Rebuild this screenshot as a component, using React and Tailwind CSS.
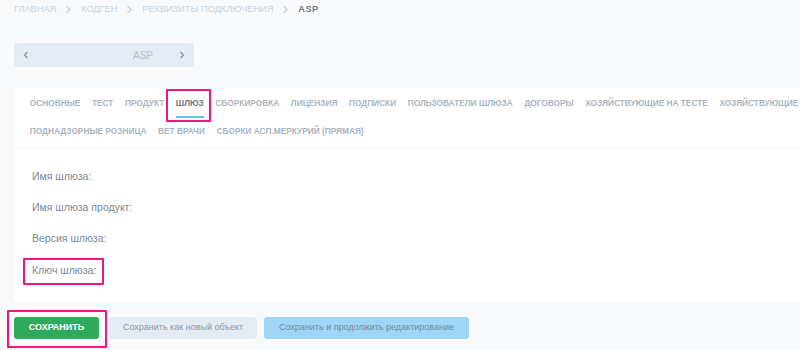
import { useState } from "react";

const rowOne = [
  "Основные",
  "Тест",
  "Продукт",
  "Шлюз",
  "Сборкировка",
  "Лицензия",
  "Подписки",
  "Пользователи шлюза",
  "Договоры",
  "Хозяйствующие на тесте",
  "Хозяйствующие на проде",
];
const rowTwo = ["Поднадзорные розница", "Вет врачи", "Сборки АСП.Меркурий (прямая)"];

const fields = ["Имя шлюза:", "Имя шлюза продукт:", "Версия шлюза:", "Ключ шлюза:"];

function Crumbs() {
  const items = ["Главная", "Кодген", "Реквизиты подключения"];
  return (
    <div className="flex items-center h-[17px] text-[9.2px] uppercase text-[#c9d4dd]">
      {items.map((item) => (
        <span key={item} className="flex items-center">
          <span>{item}</span>
          <svg width="7" height="9" viewBox="0 0 7 9" className="mx-[9px]">
            <path d="M1.5 1 L5 4.5 L1.5 8" fill="none" stroke="#c9d4dd" strokeWidth="1.3" />
          </svg>
        </span>
      ))}
      <span className="font-bold text-[#6f7982] tracking-[0.5px]">ASP</span>
    </div>
  );
}

function Tab({ label, active }) {
  return (
    <button
      className={
        "relative block px-[5.8px] h-[28px] text-[8.3px] leading-[28px] font-bold uppercase whitespace-nowrap " +
        (active ? "text-[#6f7982]" : "text-[#aab5bf]")
      }
    >
      {label}
      {active && <span className="absolute left-[6px] right-[6px] bottom-[-1px] h-[2px] bg-[#6cc0f0]" />}
      {active && (
        <span className="absolute -left-[4px] -right-[1px] top-0 -bottom-[5px] border-2 border-[#f2147f] rounded-[1px]" />
      )}
    </button>
  );
}

export default function App() {
  const [tab] = useState("Шлюз");

  return (
    <div
      className="w-[800px] h-[350px] overflow-hidden bg-[#f8f9fb]"
      style={{ fontFamily: '"Liberation Sans", Arial, sans-serif' }}
    >
      <div className="pl-[14px] pt-[1px]">
        <Crumbs />
      </div>

      <div className="pl-[14px] pt-[25px]">
        <div className="flex items-center justify-between w-[180px] h-[24px] rounded-[3px] bg-[#e4ebf2] px-[9px] text-[10px] text-[#b3bfca]">
          <svg width="6" height="8" viewBox="0 0 6 8">
            <path d="M4.5 1 L1.5 4 L4.5 7" fill="none" stroke="#8a96a1" strokeWidth="1.3" />
          </svg>
          <span className="ml-auto mr-[26px]">ASP</span>
          <svg width="6" height="8" viewBox="0 0 6 8">
            <path d="M1.5 1 L4.5 4 L1.5 7" fill="none" stroke="#8a96a1" strokeWidth="1.3" />
          </svg>
        </div>
      </div>

      <div className="ml-[14px] mt-[21px] w-[900px] h-[213px] bg-white">
        <div className="pt-[1px] pl-[10px] pb-[2px] border-b border-[#f0f2f5]">
          <div className="flex">
            {rowOne.map((t) => (
              <Tab key={t} label={t} active={t === tab} />
            ))}
          </div>
          <div className="flex">
            {rowTwo.map((t) => (
              <Tab key={t} label={t} />
            ))}
          </div>
        </div>

        <div className="pl-[18px] pt-[12px] flex flex-col">
          {fields.map((f, i) => (
            <div key={f} className="h-[31.3px] flex items-center">
              <span className="relative block text-[10.5px] leading-[16px] text-[#7d8894]">
                {f}
                {i === 3 && (
                  <span className="absolute -left-[9px] -right-[8px] -top-[4px] -bottom-[7px] border-2 border-[#f2147f] rounded-[1px]" />
                )}
              </span>
            </div>
          ))}
        </div>
      </div>

      <div className="flex items-center gap-[7px] pl-[14px] pt-[16px]">
        <div className="relative">
          <button className="block h-[22px] w-[85px] rounded-[3px] bg-[#2faa5d] text-white text-[9px] font-bold uppercase">
            Сохранить
          </button>
          <span className="absolute -left-[7px] -right-[8px] -top-[7px] -bottom-[9px] border-2 border-[#f2147f] rounded-[1px]" />
        </div>
        <button className="block ml-[3px] h-[22px] w-[148px] rounded-[3px] bg-[#e4ebf2] text-[#8c98a4] text-[9px]">
          Сохранить как новый объект
        </button>
        <button className="block h-[22px] w-[205px] rounded-[3px] bg-[#9fd5f6] text-[#6f8ba1] text-[9px]">
          Сохранить и продолжить редактирование
        </button>
      </div>
    </div>
  );
}
